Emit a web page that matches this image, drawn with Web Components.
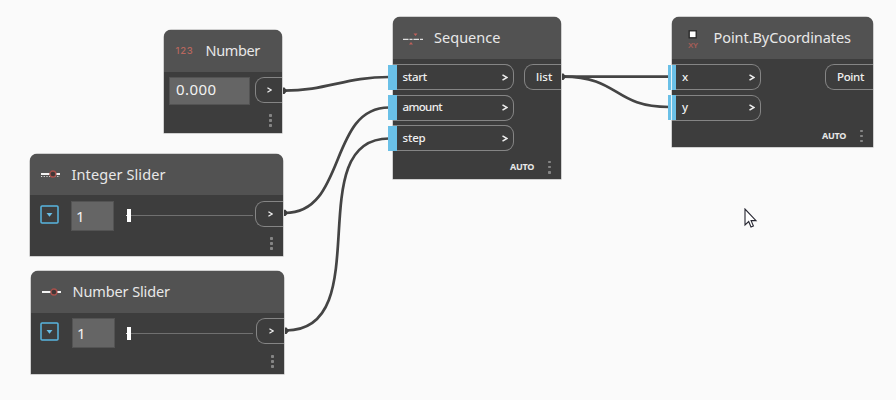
<!DOCTYPE html>
<html lang="en"><head><meta charset="utf-8"><title>Node graph</title>
<style>
html,body{margin:0;background:#fafafa}
graph-canvas{font-family:"Noto Sans","Open Sans",sans-serif}
graph-node{position:absolute}
.row{display:flex;align-items:flex-start}
</style></head><body>
<script>
function define(name, html, setup){
  const t=document.createElement('template'); t.innerHTML=html;
  customElements.define(name, class extends HTMLElement{
    connectedCallback(){
      if(this.shadowRoot) return;
      this.attachShadow({mode:'open'}).append(t.content.cloneNode(true));
      if(setup) setup(this,this.shadowRoot);
    }
  });
}
// A single line of text, tracked to fill the width given in its w attribute.
define('fit-text',`<style>:host{display:block;white-space:nowrap;line-height:1}span{display:inline-block}</style><span></span>`,(el,r)=>{
  const s=r.querySelector('span'), txt=el.getAttribute('text');
  s.textContent=txt;
  const w=parseFloat(el.getAttribute('w'));
  if(w) s.style.letterSpacing=((w-s.getBoundingClientRect().width)/txt.length).toFixed(3)+'px';
});
define('graph-canvas',`<style>:host{display:block;position:relative;width:896px;height:400px;overflow:hidden;background:#fafafa}</style><slot></slot>`);
define('graph-wires',`<style>:host{position:absolute;inset:0}svg{display:block}</style>
<svg width="896" height="400" fill="none" stroke="#444" stroke-width="2.7">
<path d="M284 90.700C326 90.700 346 77 389 77"/>
<path d="M285 213C347 213 328 107.500 389 107.500"/>
<path d="M286 330.500C379 330.500 299 138.500 389 138.500"/>
<path d="M563 76.700L669 76.700"/>
<path d="M563 76.700C620 76.700 613 107 669 107"/>
<g fill="#3e3e3e" stroke="none"><path d="M283 87.500h1.500l2.700 3.200-2.700 3.200H283zM284 209.700h1.500l2.700 3.200-2.700 3.200H284zM285 327.500h1.500l2.700 3.200-2.700 3.200H285zM562 73.500h1.500l2.700 3.200-2.700 3.200H562z"/></g></svg>`);
define('graph-node',`<style>
:host{display:flex;flex-direction:column;width:var(--w);height:var(--h);background:#3d3d3d;border-radius:7px 7px 0 0;box-shadow:0 0 0 .5px #a5a5a5;color:#e8e8e8}
header{box-sizing:border-box;height:var(--hh,42px);flex:none;background:#525252;border-radius:7px 7px 0 0;display:flex;align-items:center;padding-left:var(--ipad,10px)}
.icon{display:flex;width:var(--iw,32px);flex:none}
.title{font-size:14.500px;padding-bottom:1px}
main{flex:1;padding-top:var(--mt,5px)}
footer{height:var(--fh,25px);display:flex;justify-content:flex-end;align-items:center;gap:14px;padding-right:10.500px;font-weight:700;font-size:9px}
</style><header><span class="icon"><slot name="icon"></slot></span><fit-text class="title"></fit-text></header><main><slot></slot></main><footer><slot name="mode"></slot><more-dots></more-dots></footer>`);
define('more-dots',`<style>:host{display:flex;flex-direction:column;gap:2.700px}i{width:2.400px;height:2.400px;background:#858585;border-radius:.8px}</style><i></i><i></i><i></i>`);
define('node-port',`<style>
:host{box-sizing:border-box;display:flex;align-items:center;height:26px;width:var(--w);border:1px solid #858585;font-size:11.500px;font-weight:500;color:#f0f0f0;flex:none}
:host([side=in]){border-left:0;border-radius:0 9px 9px 0;margin-bottom:4.500px}
:host([side=out]){border-right:0;border-radius:9px 0 0 9px;margin-left:auto}
b{display:none;align-self:center;width:var(--bw,9px);height:25px;margin-left:-5px;margin-right:5.500px;background:#6ac0e7;flex:none}
:host([side=in]) b{display:block}
:host([split]) b{background:linear-gradient(90deg,#6ac0e7 3px,#e4f2f8 3px,#e4f2f8 4px,#6ac0e7 4px);margin-left:-4px;margin-right:6px}
:host([split]){--bw:8px}
svg{display:none;margin-left:auto;margin-right:5px}
:host([side=in]) svg,:host([arrow]) svg{display:block}
:host([arrow]) svg{margin-right:10px;width:5px;height:6px}
:host([side=out]) fit-text{margin-left:11px}
fit-text{margin-top:-1px}
</style><b></b><fit-text></fit-text><svg width="6" height="7" viewBox="0 0 6 7" fill="none" stroke="#eee" stroke-width="1.500"><path d="M.5 .8L5 3.500L.5 6.200"/></svg>`);
define('value-box',`<style>:host{box-sizing:border-box;display:flex;align-items:center;width:var(--w);height:var(--h);background:#656565;border:1px solid #535353;padding-left:var(--pl,6px);padding-bottom:var(--pb,0);color:#f2f2f2;font-size:15px}</style><fit-text></fit-text>`);
define('drop-button',`<style>:host{display:block;width:19px;height:19px}svg{display:block}</style><svg width="19" height="19"><rect x="1" y="1" width="17" height="17" rx="1" fill="#3d3d3d" stroke="#58b5df" stroke-width="1.500"/><path d="M6.500 8H12.500L9.500 11.700Z" fill="#69bde4"/></svg>`);
define('slider-track',`<style>:host{display:flex;align-items:center;width:127px;height:14px}i{width:1px;height:1px;background:#ddd;flex:none}b{width:4px;height:13px;background:#fff;flex:none}hr{flex:1;margin:0;border:0;height:1px;background:#707070}</style><i></i><b></b><hr>`);
define('pointer-cursor',`<style>:host{position:absolute;left:744px;top:208px}svg{display:block}</style><svg width="14" height="21"><path d="M1 1V17L4.700 13.500L7 19L9.400 18L7.100 12.600H12Z" fill="#fff" stroke="#252530" stroke-width="1.100"/></svg>`);
define('node-icon',`<style>:host{display:block}svg{display:block;overflow:visible}</style><div></div>`,(el,r)=>{
  const d=r.querySelector('div'),line='<svg width="20" height="10"><path d="M0 5H19" stroke="#f2f2f2" stroke-width="2"/>';
  const dot='<circle cx="11.900" cy="5" r="3" fill="#403737" stroke="#a8504b" stroke-width="1.300"/></svg>';
  d.innerHTML={
    number:'<fit-text style="font:500 9.500px Inter,sans-serif;line-height:1;color:#b8675e;margin-top:-1px" text="123" w="18"></fit-text>',
    integer:line+'<path d="M0 7.500H19" stroke="#ddd" stroke-dasharray="1.200 1.500"/>'+dot,
    slider:line+dot,
    sequence:'<svg width="21" height="12"><path d="M0 7.300H21" stroke="#e0e0e0" stroke-width="1.200" stroke-dasharray="5.500 1 3 1"/><path d="M10.500 1.500H14.500L12.500 3.900ZM6 12.500H10L8 10.100Z" fill="#c0605a"/></svg>',
    point:'<svg width="12" height="20"><rect x="2.200" y=".8" width="7" height="7" fill="#fff" stroke="#252525" stroke-width="1.300"/><text x="1" y="18" font-family="Liberation Sans" font-size="8" font-weight="700" textLength="10" fill="#a15d57">XY</text></svg>'
  }[el.getAttribute('kind')];
});
</script>
<script>
// Pass text and width attributes through to the inner label.
function label(host,w,text){const f=host.shadowRoot.querySelector('fit-text');const n=document.createElement('fit-text');n.className=f.className;n.setAttribute('text',text);if(w)n.setAttribute('w',w);f.replaceWith(n);}
document.addEventListener('DOMContentLoaded',()=>{
  document.querySelectorAll('graph-node,node-port,value-box').forEach(e=>{
    const t=e.getAttribute('label'); if(t) label(e,e.getAttribute('lw'),t);
  });
});
</script>
<graph-canvas>
<graph-wires></graph-wires>
<graph-node label="Number" lw="54.500" style="left:164px;top:30px;--w:118px;--h:103px;--ipad:11.500px;--iw:30px">
<node-icon slot="icon" kind="number"></node-icon>
<div class="row"><value-box label="0.000" lw="40.500" style="--w:81px;--h:28px;--pb:3px;margin-left:5px"></value-box><node-port side="out" arrow style="--w:27px"></node-port></div>
</graph-node>
<graph-node label="Integer Slider" lw="94" style="left:30px;top:153.500px;--w:253px;--h:102.500px;--hh:41.500px;--mt:6px;--ipad:11px;--iw:30.500px">
<node-icon slot="icon" kind="integer"></node-icon>
<div class="row"><drop-button style="margin:4px 0 0 10px"></drop-button><value-box label="1" style="--w:43px;--h:30px;--pl:4px;margin-left:12px"></value-box><slider-track style="margin:7px 0 0 12px"></slider-track><node-port side="out" arrow style="--w:28px"></node-port></div>
</graph-node>
<graph-node label="Number Slider" lw="97.500" style="left:31px;top:271px;--w:253px;--h:103px;--ipad:10.500px;--iw:31px">
<node-icon slot="icon" kind="slider"></node-icon>
<div class="row"><drop-button style="margin:4px 0 0 9px"></drop-button><value-box label="1" style="--w:43px;--h:30px;--pl:4px;margin-left:13px"></value-box><slider-track style="margin:8px 0 0 11px"></slider-track><node-port side="out" arrow style="--w:28px"></node-port></div>
</graph-node>
<graph-node label="Sequence" lw="66.500" style="left:393px;top:17px;--w:168px;--h:162px;--fh:26px;--ipad:10px;--iw:31px">
<node-icon slot="icon" kind="sequence"></node-icon>
<div class="row"><div><node-port side="in" label="start" lw="24.500" style="--w:121px"></node-port><node-port side="in" label="amount" lw="39.500" style="--w:121px"></node-port><node-port side="in" label="step" lw="23" style="--w:121px"></node-port></div><node-port side="out" label="list" lw="16.500" style="--w:37px"></node-port></div>
<fit-text slot="mode" text="AUTO" w="24" style="margin-top:-2px"></fit-text>
</graph-node>
<graph-node label="Point.ByCoordinates" lw="137.500" style="left:672px;top:17px;--w:201px;--h:130px;--fh:27px;--ipad:14.500px;--iw:27px">
<node-icon slot="icon" kind="point" style="padding-top:3px"></node-icon>
<div class="row"><div><node-port side="in" split label="x" style="--w:89px"></node-port><node-port side="in" split label="y" style="--w:89px"></node-port></div><node-port side="out" label="Point" lw="27" style="--w:48px"></node-port></div>
<fit-text slot="mode" text="AUTO" w="24" style="margin-top:-2px"></fit-text>
</graph-node>
<pointer-cursor></pointer-cursor>
</graph-canvas>
</body></html>
